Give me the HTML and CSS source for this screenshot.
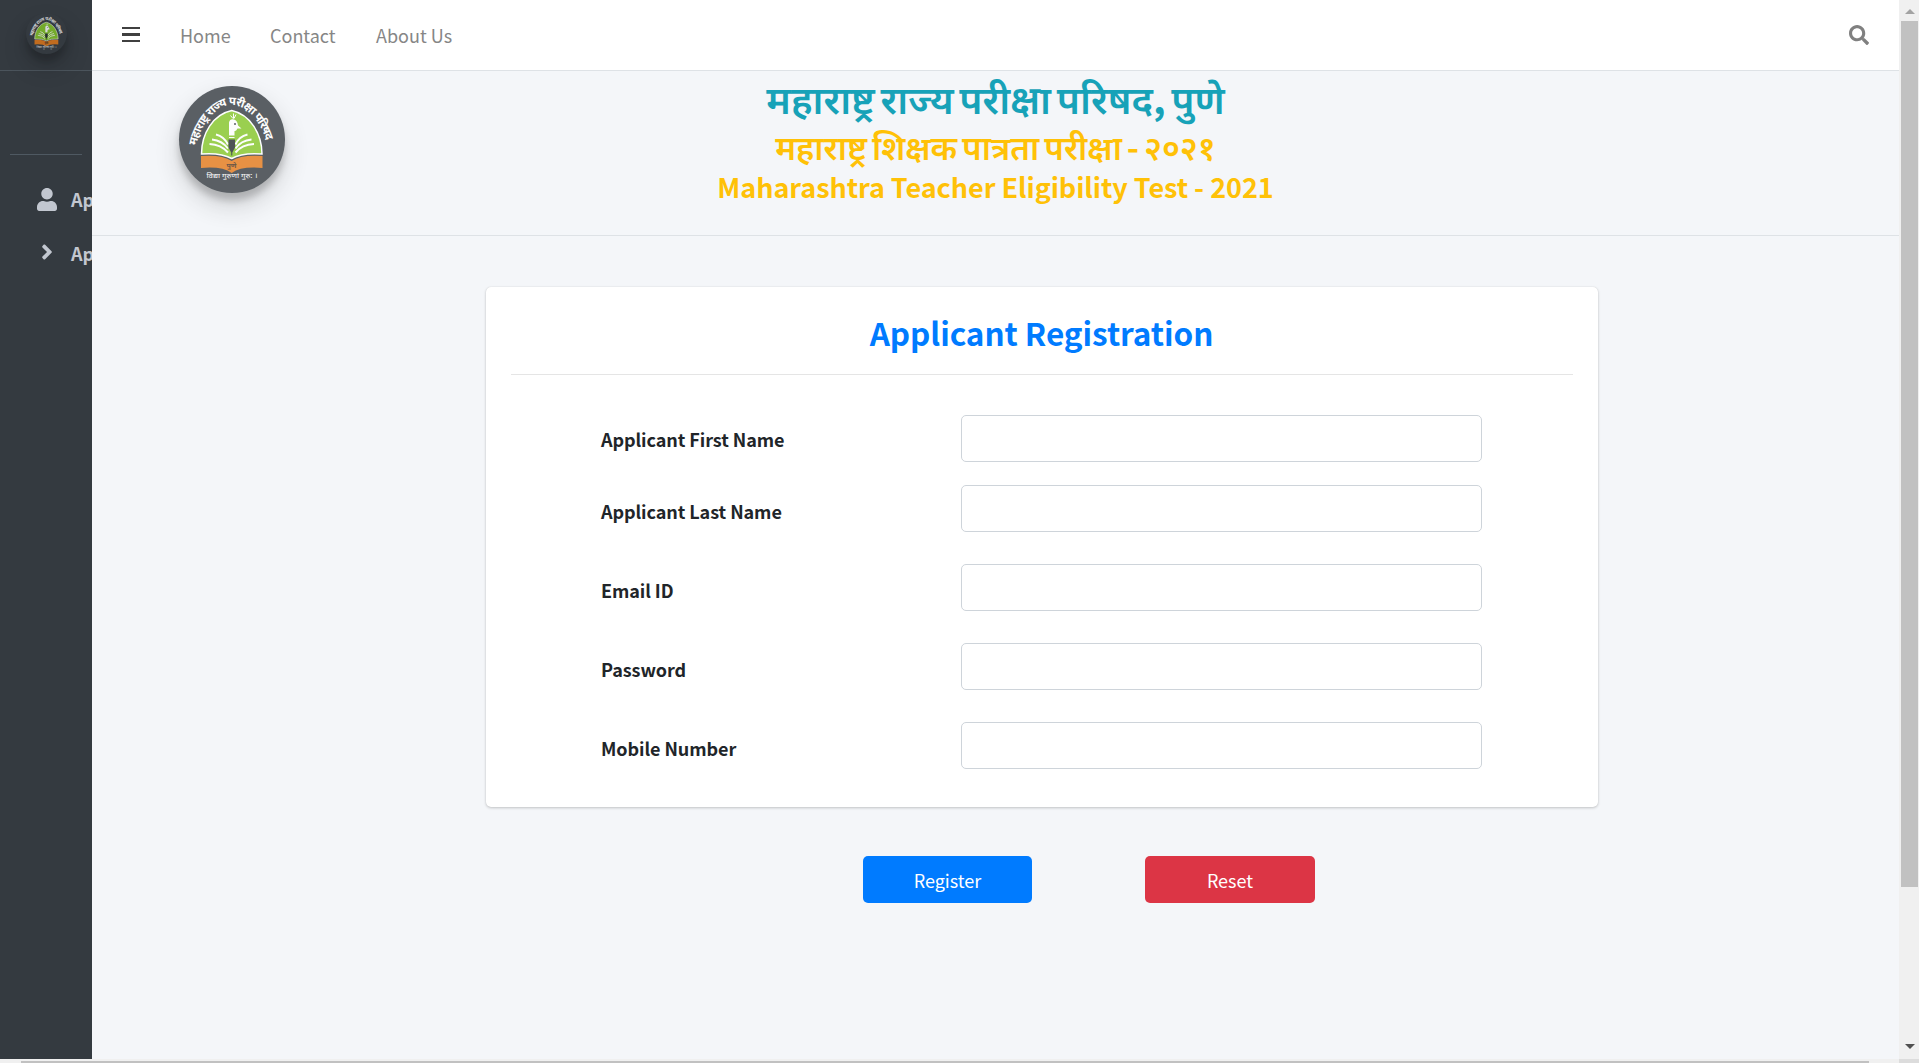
FILE: index.html
```html
<!DOCTYPE html>
<html lang="en">
<head>
<meta charset="utf-8">
<title>Applicant Registration</title>
<link rel="stylesheet" href="styles.css">
</head>
<body>
<svg class="defs" aria-hidden="true">
  <symbol id="emblem" viewBox="0 0 106 106">
    <path id="arc" fill="none" d="M17.500 59C20 42 33 24 46 19.500Q52.500 17.500 59 19.500C73 24 85 42 89 61"/>
    <text class="emblem-arc"><textPath href="#arc" textLength="110">महाराष्ट्र राज्य परीक्षा परिषद</textPath></text>
    <path fill="#84c627" stroke="#fff" stroke-width="1.500" d="M22.500 67.500C22.500 47 34 28 52.700 24C71 28 83 47 83 67.500Q63 66 52.700 72Q42 66 22.500 67.500Z"/>
    <path fill="#e57918" d="M22 69.500Q43 68 52.700 74.500Q62 68 83.500 69.500V81.500Q62 79.500 52.700 86.500Q43 79.500 22 81.500Z"/>
    <g fill="none" stroke="#fff" stroke-width="2">
      <path d="M37 48Q45 50 49 58M33 53Q43 54 49 62M30.500 57.500Q42 58 49 66"/>
      <path d="M68.500 48Q60 50 56.500 58M72.500 53Q62 54 56.500 62M75 57.500Q63 58 56.500 66"/>
    </g>
    <path fill="#fff" d="M50 49V36Q51 32 55 33Q58.500 34 59 39L62.500 42L58.500 42Q57 45 55.500 44.500V49Z"/>
    <circle cx="56" cy="37.500" r="1" fill="#343a40"/>
    <path fill="none" stroke="#fff" stroke-width="1" d="M54.500 32V27M55 32L57 28M54 32L51.500 29M50 51H55.500"/>
    <path fill="#252b2e" d="M49.500 53H56V61L53.300 66V69H52.200V66L49.500 61Z"/>
    <text class="emblem-city" x="52.500" y="81">पुणे</text>
    <text class="emblem-motto" x="53" y="91.500" textLength="51" lengthAdjust="spacingAndGlyphs">विद्या गुरुणां गुरु: ।</text>
  </symbol>
</svg>
<div class="window">
  <aside class="sidebar">
    <div class="brand"><svg class="emblem emblem-small"><use href="#emblem"/></svg></div>
    <div class="user-panel"></div>
    <nav class="side-nav">
      <a class="side-link"><svg class="icon-user" viewBox="0 0 448 512"><path d="M224 256c70.700 0 128-57.300 128-128S294.700 0 224 0 96 57.300 96 128s57.300 128 128 128zm89.600 32h-16.700c-22.200 10.200-46.900 16-72.900 16s-50.600-5.800-72.900-16h-16.700C60.200 288 0 348.200 0 422.400V464c0 26.500 21.500 48 48 48h352c26.500 0 48-21.500 48-48v-41.600c0-74.200-60.200-134.400-134.400-134.400z"/></svg><span>Applicant</span></a>
      <a class="side-link"><svg class="icon-angle" viewBox="0 0 256 512"><path d="M224.300 273l-136 136c-9.400 9.400-24.600 9.400-33.900 0l-22.600-22.600c-9.400-9.400-9.400-24.600 0-33.900l96.400-96.400-96.400-96.400c-9.400-9.400-9.400-24.600 0-33.900L54.300 103c9.400-9.400 24.600-9.400 33.900 0l136 136c9.500 9.400 9.500 24.600.1 34z"/></svg><span>Applicant</span></a>
    </nav>
  </aside>
  <div class="page">
    <nav class="topbar">
      <span class="bars"><i></i><i></i><i></i></span>
      <a class="nav-home">Home</a>
      <a class="nav-contact">Contact</a>
      <a class="nav-about">About Us</a>
      <svg class="icon-search" viewBox="0 0 512 512"><path d="M505 442.700L405.300 343c-4.500-4.500-10.600-7-17-7H372c27.600-35.300 44-79.700 44-128C416 93.100 322.900 0 208 0S0 93.100 0 208s93.100 208 208 208c48.300 0 92.700-16.400 128-44v16.300c0 6.400 2.500 12.500 7 17l99.700 99.700c9.400 9.400 24.600 9.400 33.900 0l28.300-28.300c9.400-9.400 9.400-24.600.1-34zM208 336c-70.700 0-128-57.200-128-128 0-70.700 57.200-128 128-128 70.700 0 128 57.200 128 128 0 70.700-57.200 128-128 128z"/></svg>
    </nav>
    <header class="masthead">
      <svg class="emblem emblem-large"><use href="#emblem"/></svg>
      <div class="titles">
        <h1>महाराष्ट्र राज्य परीक्षा परिषद, पुणे</h1>
        <h2>महाराष्ट्र शिक्षक पात्रता परीक्षा - २०२१</h2>
        <h3>Maharashtra Teacher Eligibility Test - 2021</h3>
      </div>
    </header>
    <form class="registration">
      <section class="card">
        <h4>Applicant Registration</h4>
        <div class="fields">
          <label for="first">Applicant First Name</label><input id="first" type="text">
          <label for="last">Applicant Last Name</label><input id="last" type="text">
          <label for="email">Email ID</label><input id="email" type="text">
          <label for="password">Password</label><input id="password" type="password">
          <label for="mobile">Mobile Number</label><input id="mobile" type="text">
        </div>
      </section>
      <div class="actions">
        <button class="btn-register" type="button">Register</button>
        <button class="btn-reset" type="button">Reset</button>
      </div>
    </form>
  </div>
  <div class="scroll-y"><i class="arrow-up"></i><i class="thumb-y"></i><i class="arrow-down"></i></div>
  <div class="scroll-x"><i class="thumb-x"></i></div>
  <div class="scroll-corner"></div>
</div>
</body>
</html>
```
FILE: styles.css
```css
* { box-sizing: border-box; }
body {
  margin: 0;
  overflow: hidden;
  color: #212529;
  background: #f4f6f9;
  font: 400 18px/24px "Noto Sans CJK SC", "Noto Sans", sans-serif;
}
h1, h2, h3, h4 { margin: 0; white-space: nowrap; }
.defs { position: absolute; width: 0; height: 0; }
.window {
  display: grid;
  grid-template: 1059px 4px / 92px 1807px 20px;
  width: 1919px;
  height: 1063px;
}

/* Emblem */
.emblem {
  display: block;
  border-radius: 50%;
  background: #343a40;
  opacity: .8;
  box-shadow: 0 12.5px 25px rgba(0,0,0,.19), 0 7.5px 7.5px rgba(0,0,0,.23);
}
.emblem-small { width: 41px; height: 41px; }
.emblem-large { width: 106px; height: 107px; }
.emblem-arc { font: 700 11.500px "Noto Sans", sans-serif; fill: #fff; }
.emblem-city { font: 700 7px "Noto Sans", sans-serif; fill: #49301c; text-anchor: middle; }
.emblem-motto { font: 400 7px "Noto Sans", sans-serif; fill: #fff; text-anchor: middle; }

/* Sidebar */
.sidebar { overflow: hidden; background: #343a40; }
.brand {
  display: flex;
  justify-content: center;
  height: 71px;
  padding: 13px 0 0 1px;
  border-bottom: 1px solid #4b545c;
}
.user-panel { height: 84px; margin: 0 10px; border-bottom: 1px solid #4f5962; }
.side-nav { display: grid; gap: 10px; padding-top: 22px; }
.side-link {
  display: grid;
  grid-template-columns: 51px auto;
  align-items: center;
  height: 44px;
  padding-left: 20px;
  color: #c2c7d0;
  font-weight: 700;
}
.side-link svg { fill: #c2c7d0; }
.icon-user { width: 20px; height: 23px; margin-left: 17px; }
.icon-angle { width: 12px; height: 24px; margin: 0 0 2px 21px; }

/* Top bar */
.topbar {
  display: flex;
  align-items: center;
  height: 71px;
  padding: 0 30px 1px;
  background: #fff;
  border-bottom: 1px solid #dee2e6;
  color: #868686;
}
.bars { display: grid; gap: 4px; width: 18px; margin-right: 40px; }
.bars i { height: 2.400px; background: #404040; }
.nav-home { width: 90px; }
.nav-contact { width: 106px; }
.icon-search { width: 20px; height: 20px; margin-left: auto; fill: #808080; }

/* Masthead */
.masthead {
  display: grid;
  grid-template-columns: 193px 1fr 193px;
  height: 165px;
  border-bottom: 1px solid #dee2e6;
}
.emblem-large { margin: 15px 0 0 87px; }
.titles { text-align: center; }
h1 {
  color: #17a2b8;
  font-size: 39px;
  font-weight: 600;
  line-height: 52px;
  word-spacing: -3.200px;
}
h2 {
  color: #ffc107;
  font-size: 33px;
  font-weight: 600;
  line-height: 47px;
  word-spacing: -2.600px;
}
h3 {
  color: #ffc107;
  font-size: 27px;
  line-height: 34px;
  letter-spacing: -.05px;
}

/* Registration form */
.registration { padding: 51px 0 0 393.500px; }
.card {
  width: 1112px;
  height: 520px;
  padding: 0 25px;
  border-radius: 5px;
  background: #fff;
  box-shadow: 0 0 1px rgba(0,0,0,.125), 0 1px 3px rgba(0,0,0,.2);
}
h4 {
  height: 88px;
  color: #007bff;
  font-size: 31.500px;
  line-height: 90px;
  letter-spacing: -.05px;
  text-align: center;
  border-bottom: 1px solid #e5e5e5;
}
.fields {
  display: grid;
  grid-template-columns: 360px 521px;
  grid-template-rows: 38px 47px 47px 47px 47px;
  row-gap: 32px;
  padding: 40px 0 0 90.500px;
}
.fields label { font-weight: 700; line-height: 52px; letter-spacing: -.07px; }
.fields label:first-child { line-height: 49px; }
.fields input {
  width: 521px;
  height: 47px;
  border: 1px solid #ced4da;
  border-radius: 5px;
  background: #fff;
}
.actions { display: flex; gap: 113px; padding: 49px 0 0 377.500px; }
.actions button {
  height: 47px;
  padding: 0;
  border: 0;
  border-radius: 5px;
  color: #fff;
  font: inherit;
}
.btn-register { width: 169px; background: #007bff; }
.btn-reset { width: 170px; background: #dc3545; }

/* Scrollbars */
.scroll-y {
  display: flex;
  flex-direction: column;
  align-items: center;
  padding: 9px 0 10px 1px;
  background: #f0f0f0;
}
.arrow-up { border: 5px solid transparent; border-top: 0; border-bottom-color: #a3a3a3; }
.thumb-y { width: 17px; height: 866px; margin-top: 7px; background: #c1c1c1; }
.arrow-down { margin-top: auto; border: 5px solid transparent; border-bottom: 0; border-top-color: #505050; }
.scroll-x { grid-column: 1 / 3; padding: 2px 0 0 21px; background: #f0f0f0; }
.thumb-x { display: block; width: 1848px; height: 2px; background: #c1c1c1; }
.scroll-corner { background: #dcdcdc; }
```
